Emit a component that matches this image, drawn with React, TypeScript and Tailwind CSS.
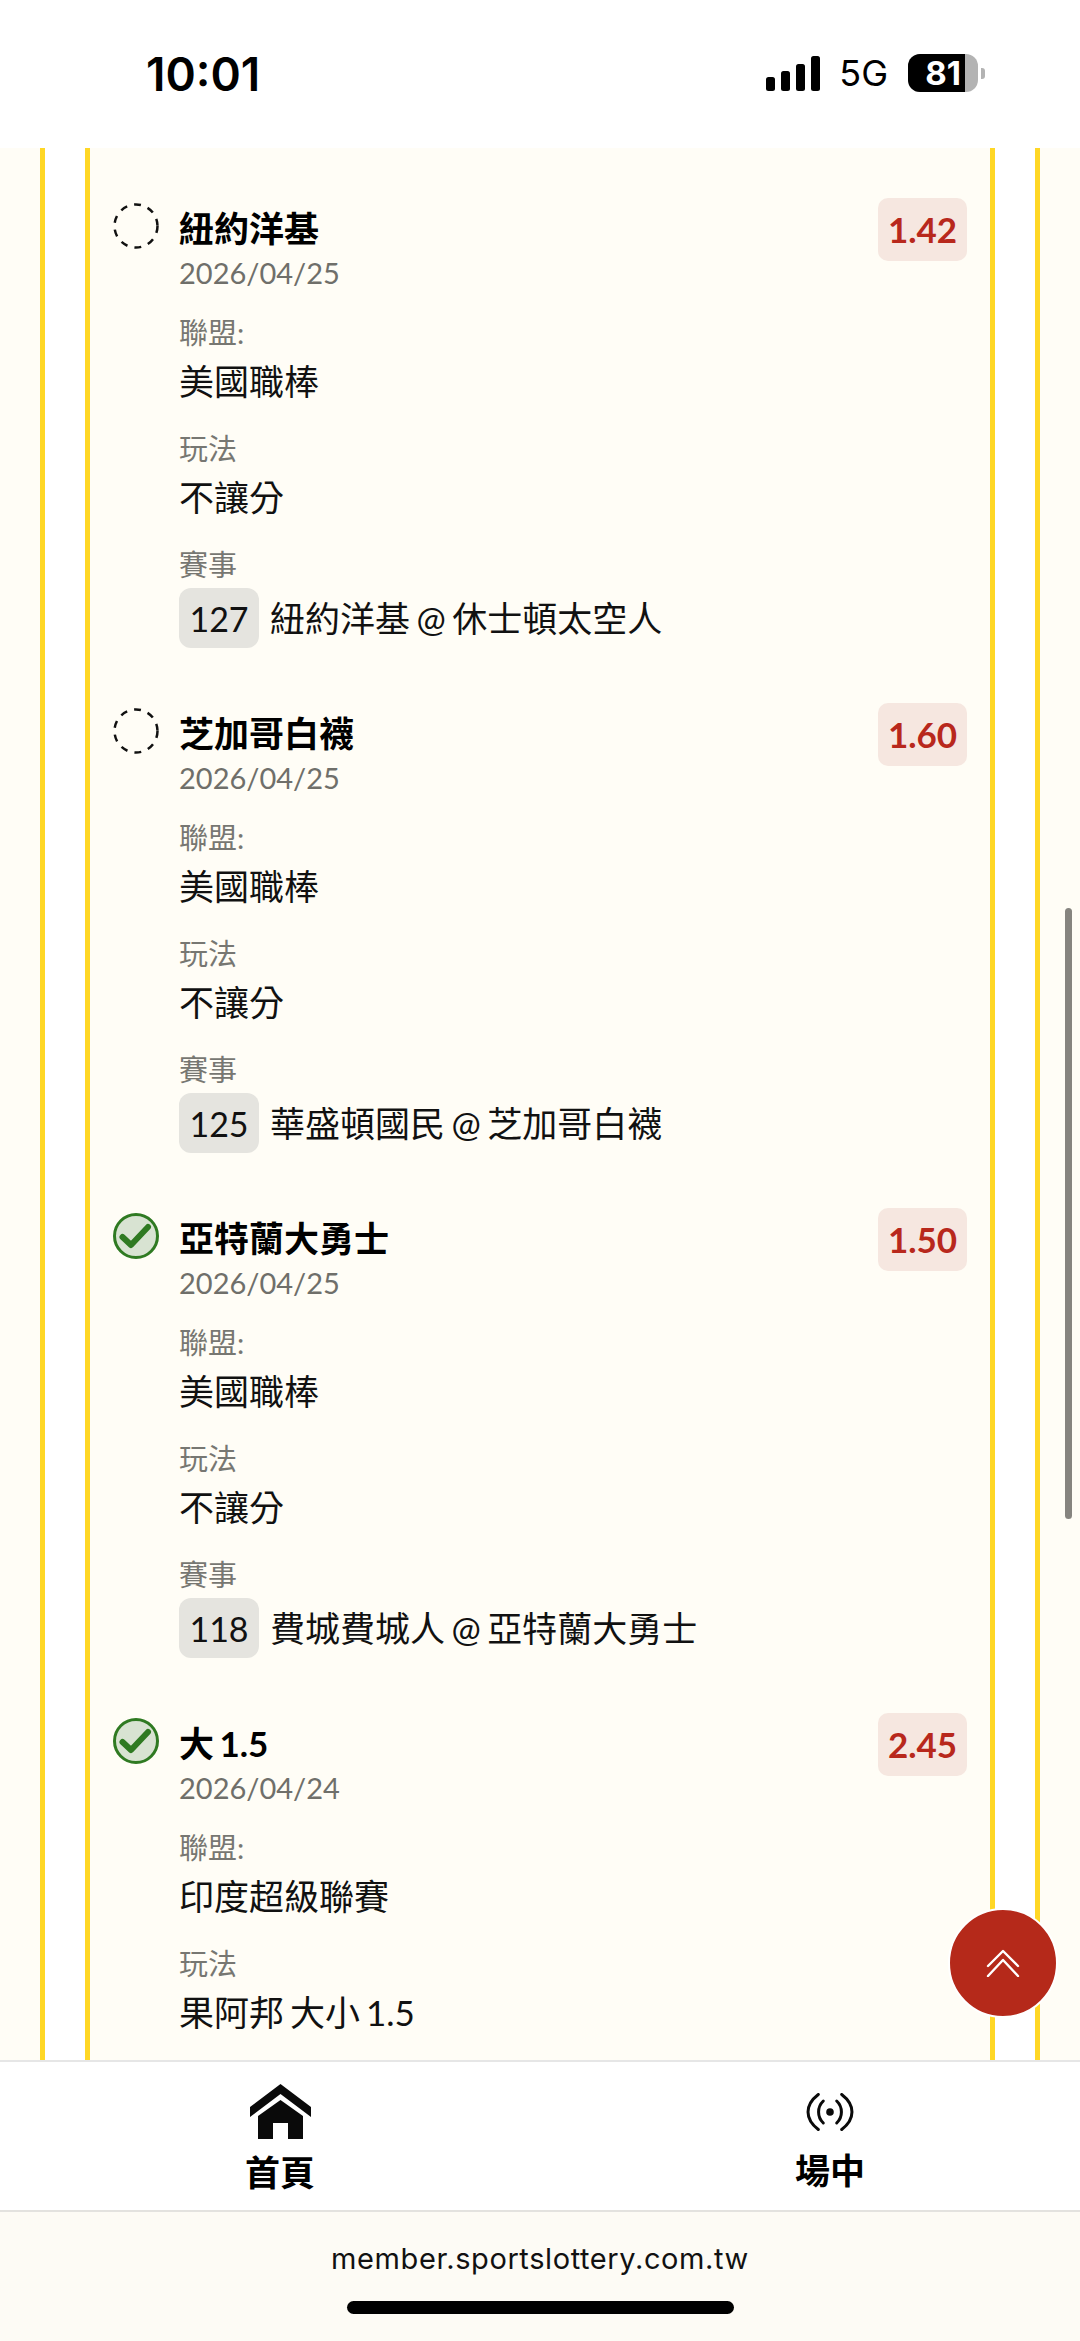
const FONT = "font-['Lato','Noto_Sans_CJK_TC','Noto_Sans',sans-serif]";

interface Pick {
  name: string;
  date: string;
  odds: string;
  league: string;
  play: string;
  code?: string;
  game?: string;
  won: boolean;
}

const picks: Pick[] = [
  { name: '紐約洋基', date: '2026/04/25', odds: '1.42', league: '美國職棒', play: '不讓分', code: '127', game: '紐約洋基 @ 休士頓太空人', won: false },
  { name: '芝加哥白襪', date: '2026/04/25', odds: '1.60', league: '美國職棒', play: '不讓分', code: '125', game: '華盛頓國民 @ 芝加哥白襪', won: false },
  { name: '亞特蘭大勇士', date: '2026/04/25', odds: '1.50', league: '美國職棒', play: '不讓分', code: '118', game: '費城費城人 @ 亞特蘭大勇士', won: true },
  { name: '大 1.5', date: '2026/04/24', odds: '2.45', league: '印度超級聯賽', play: '果阿邦 大小 1.5', won: true },
];

function StatusIcon({ won }: { won: boolean }) {
  if (won) {
    return (
      <svg width="46" height="46" viewBox="0 0 46 46" className="shrink-0">
        <circle cx="23" cy="23" r="21.5" fill="#d8e3d2" stroke="#2f7a22" strokeWidth="3" />
        <path d="M9.5 24 L18 32 L35 14" fill="none" stroke="#2f7a22" strokeWidth="6" strokeLinecap="round" strokeLinejoin="round" />
      </svg>
    );
  }
  return (
    <svg width="46" height="46" viewBox="0 0 46 46" className="shrink-0">
      <circle cx="23" cy="23" r="21.5" fill="none" stroke="#111" strokeWidth="2.5" strokeDasharray="7 7.1" />
    </svg>
  );
}

function PickRow({ pick }: { pick: Pick }) {
  return (
    <div className="flex items-start h-[505px]">
      <div className="mt-[5px] mr-[20px] flex">
        <StatusIcon won={pick.won} />
      </div>
      <div className="flex-1 min-w-0">
        <div className="text-[35px] leading-[48px] mt-[6px] font-bold text-black [word-spacing:-3px]">{pick.name}</div>
        <div className="text-[29px] leading-[36px] mt-[3px] text-[#6f6f6a]">{pick.date}</div>

        <div className="text-[29px] leading-[40px] mt-[22px] text-[#777772]">聯盟:</div>
        <div className="text-[35px] leading-[48px] mt-[4px] text-[#111] [word-spacing:-3px]">{pick.league}</div>

        <div className="text-[29px] leading-[40px] mt-[24px] text-[#777772]">玩法</div>
        <div className="text-[35px] leading-[48px] mt-[4px] text-[#111] [word-spacing:-3px]">{pick.play}</div>

        {pick.code && (
          <>
            <div className="text-[29px] leading-[40px] mt-[24px] text-[#777772]">賽事</div>
            <div className="flex items-center mt-[3px]">
              <span className="w-[80px] h-[60px] flex items-center justify-center rounded-[12px] bg-[#e5e4df] text-[34px] text-[#111]">
                {pick.code}
              </span>
              <span className="ml-[11px] text-[35px] text-[#111] [word-spacing:-2.5px]">{pick.game}</span>
            </div>
          </>
        )}
      </div>
      <div className="w-[89px] h-[63px] flex items-center justify-center rounded-[10px] bg-[#f6e7e0] text-[35px] font-bold text-[#b8281c]">
        {pick.odds}
      </div>
    </div>
  );
}

export default function App() {
  return (
    <div className={`${FONT} w-[1080px] h-[2341px] flex flex-col overflow-hidden bg-white`}>
      {/* Status bar */}
      <div className="h-[148px] shrink-0 bg-white flex items-start justify-between pt-[50px] pl-[146px] pr-[95px] font-['Inter',sans-serif] text-black">
        <span className="text-[46px] leading-[48px] font-semibold">10:01</span>
        <div className="flex items-center mt-[3px]">
          <svg width="54" height="35" viewBox="0 0 54 35">
            <rect x="0" y="21" width="9" height="14" rx="2.5" fill="#000" />
            <rect x="15" y="15" width="9" height="20" rx="2.5" fill="#000" />
            <rect x="30" y="8" width="9" height="27" rx="2.5" fill="#000" />
            <rect x="45" y="0" width="9" height="35" rx="2.5" fill="#000" />
          </svg>
          <span className="ml-[19px] text-[36px] leading-[40px] font-normal">5G</span>
          <div className="ml-[20px] flex items-center">
            <div className="w-[70px] h-[38px] rounded-[12px] overflow-hidden flex bg-[#b3b3b3]">
              <div className="w-[57px] bg-black flex items-center justify-end pr-[4px] text-white text-[33px] font-bold leading-none">81</div>
            </div>
            <div className="ml-[3px] w-[4px] h-[11px] rounded-r-[3px] bg-[#b3b3b3]" />
          </div>
        </div>
      </div>

      {/* Scrolled content */}
      <div className="relative flex-1 min-h-0 overflow-hidden bg-[#fffdf6] px-[40px]">
        <div className="h-full bg-white border-x-[5px] border-[#ffd725] px-[40px]">
          <div className="h-full overflow-hidden bg-[#fffdf6] border-x-[5px] border-[#ffd725] pl-[23px] pr-[23px] pt-[50px]">
            {picks.map((pick) => (
              <PickRow key={pick.name} pick={pick} />
            ))}
          </div>
        </div>

        <div className="absolute left-[1065px] top-[760px] w-[7px] h-[611px] rounded-full bg-[#86847f]" />

        <button className="absolute left-[948px] top-[1760px] w-[110px] h-[110px] rounded-full bg-[#b5291a] border-[2px] border-white flex items-center justify-center">
          <svg width="34" height="28" viewBox="0 0 34 28" fill="none" stroke="#fff" strokeWidth="2.4" strokeLinecap="round" strokeLinejoin="round">
            <path d="M2 17 L17 2 L32 17" />
            <path d="M2 27 L17 11 L32 27" />
          </svg>
        </button>
      </div>

      {/* Bottom nav */}
      <div className="h-[150px] shrink-0 bg-white border-t-[2px] border-[#e6e6e6] flex gap-[20px]">
        <div className="w-[560px] flex flex-col items-center pt-[22px]">
          <svg width="61" height="55" viewBox="0 0 61 55" fill="#0a0a0a">
            <path d="M30.5 0 L61 23 L61 33 L30.5 10 L0 33 L0 23 Z" />
            <path d="M30.5 16 L53 32 L53 55 L38 55 L38 39 L23 39 L23 55 L8 55 L8 32 Z" />
          </svg>
          <span className="mt-[11px] text-[35px] leading-[44px] font-bold text-black">首頁</span>
        </div>
        <div className="flex-1 flex flex-col items-center pt-[31px]">
          <svg width="48" height="38" viewBox="0 0 48 38" fill="none" stroke="#0a0a0a" strokeWidth="3" strokeLinecap="round">
            <circle cx="24" cy="19" r="3.8" fill="#0a0a0a" stroke="none" />
            <path d="M17.3 8 C11 14 11 24 17.3 30" />
            <path d="M30.7 8 C37 14 37 24 30.7 30" />
            <path d="M12.3 1.5 C-1.4 12 -1.4 26 12.3 36.5" />
            <path d="M35.7 1.5 C49.4 12 49.4 26 35.7 36.5" />
          </svg>
          <span className="mt-[17px] text-[35px] leading-[44px] font-bold text-black">場中</span>
        </div>
      </div>

      {/* Browser url bar */}
      <div className="h-[131px] shrink-0 bg-[#fdfbf5] border-t-[2px] border-[#e3e2df] flex flex-col items-center">
        <span className="mt-[29px] font-['Inter',sans-serif] text-[29px] leading-[36px] tracking-[0.6px] text-[#111]">member.sportslottery.com.tw</span>
        <div className="mt-[24px] w-[387px] h-[13px] rounded-full bg-black" />
      </div>
    </div>
  );
}
